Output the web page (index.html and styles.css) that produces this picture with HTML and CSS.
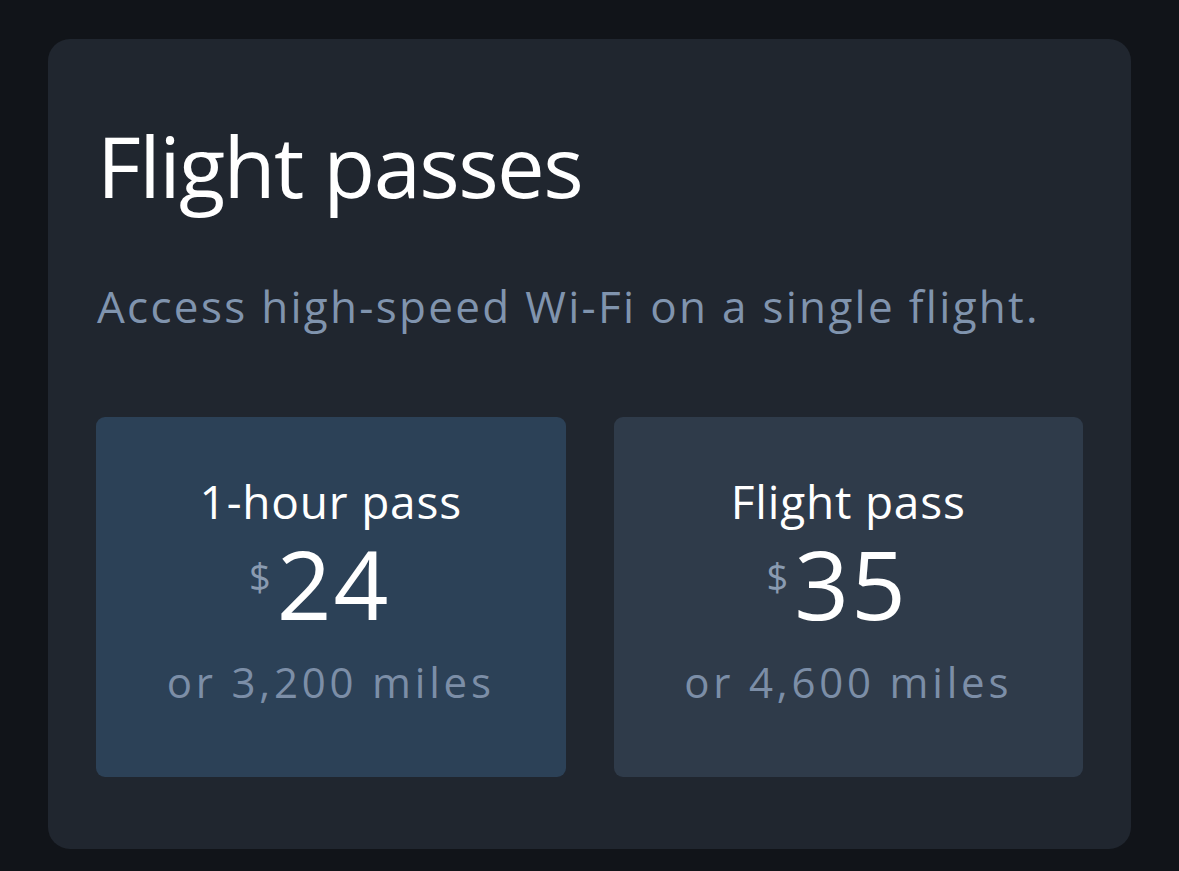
FILE: index.html
```html
<!DOCTYPE html>
<html lang="en">
<head>
<meta charset="utf-8">
<title>Flight passes</title>
<link rel="stylesheet" href="styles.css">
</head>
<body>
<main class="page">
  <section class="card">
    <h1 class="title">Flight passes</h1>
    <p class="subtitle">Access high-speed Wi-Fi on a single flight.</p>
    <div class="passes">
      <div class="pass pass-selected">
        <div class="pass-name">1-hour pass</div>
        <div class="pass-price"><span class="currency">$</span><span class="amount">24</span></div>
        <div class="pass-miles">or 3,200 miles</div>
      </div>
      <div class="pass">
        <div class="pass-name">Flight pass</div>
        <div class="pass-price"><span class="currency">$</span><span class="amount">35</span></div>
        <div class="pass-miles">or 4,600 miles</div>
      </div>
    </div>
  </section>
</main>
</body>
</html>
```

FILE: styles.css
```css
html, body {
  margin: 0;
  padding: 0;
}
body {
  background: #111419;
  font-family: "Open Sans", "Noto Sans", sans-serif;
  color: #ffffff;
  width: 1179px;
  height: 871px;
  overflow: hidden;
}
.page {
  padding: 39px 48px 0 48px;
}
.card {
  background: #20262f;
  border-radius: 22px;
  height: 810px;
  box-sizing: border-box;
  padding: 76px 48px 0 48px;
}
.title {
  margin: 0;
  font-size: 85px;
  font-weight: 400;
  line-height: 100px;
  letter-spacing: -1.6px;
  color: #ffffff;
  padding-left: 1px;
}
.subtitle {
  margin: 64px 0 0 0;
  font-size: 44px;
  line-height: 54px;
  letter-spacing: 2.3px;
  color: #8094ae;
  padding-left: 1px;
}
.passes {
  margin-top: 84px;
  display: grid;
  grid-template-columns: 1fr 1fr;
  gap: 48px;
}
.pass {
  height: 360px;
  box-sizing: border-box;
  padding-top: 56px;
  border-radius: 9px;
  background: #2f3b4a;
  display: flex;
  flex-direction: column;
  align-items: center;
}
.pass-selected {
  background: #2c4157;
}
.pass-name {
  font-size: 46px;
  line-height: 56px;
  letter-spacing: 0.8px;
  color: #ffffff;
}
.pass-price {
  display: flex;
  align-items: flex-start;
  line-height: 108px;
  height: 108px;
}
.currency {
  font-size: 38px;
  line-height: 32px;
  color: #8a9bb1;
  margin-top: 31px;
  margin-right: 6px;
}
.amount {
  font-size: 96px;
  letter-spacing: 2px;
  padding-right: 22px;
}
.pass-miles {
  margin-top: 20px;
  font-size: 42px;
  line-height: 50px;
  letter-spacing: 3.8px;
  color: #7c8ea7;
}
```
